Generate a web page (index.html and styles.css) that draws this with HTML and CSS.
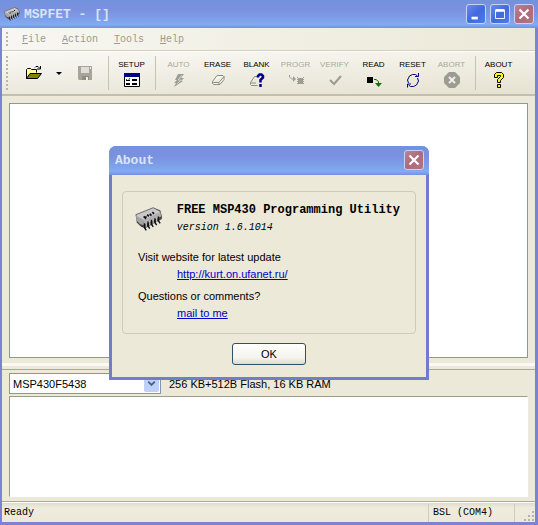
FILE: index.html
```
<!DOCTYPE html>
<html lang="en">
<head>
  <meta charset="utf-8">
  <title>MSPFET - []</title>
  <link rel="stylesheet" href="styles.css">
</head>
<body>

  <svg class="defs" aria-hidden="true">
    <!-- chip, shared by the title bar and the about box -->
    <symbol id="chip" viewBox="0 0 32 28">
      <path d="M1 9 21 1l8 3 2 7v3L12 25l-5-2-5-5z" fill="#444"/>
      <path d="M1 9 21 1l8 4 1 5-19 8-9-5z" fill="#c9c9c9" stroke="#666"/>
      <path d="M1 10l9 5v6l-4-1-4-4z" fill="#a4a4a4"/>
      <path d="M10 15 29 6l1 5-20 10z" fill="#b0b0b0"/>
      <path d="M11 19v5l2 3M15 17v5l2 3M19 15v5l2 3M23 13v5l2 3M27 11v5l2 3" fill="none" stroke="#111" stroke-width="1.6"/>
      <path d="M13 19v4l2 2M17 17v4l2 2M21 15v4l2 2M25 13v4l2 2" fill="none" stroke="#e4e4e4"/>
      <path d="m10 11 2 2 1-2M14 9l2 2M17 8l2 2M20 6l2 2" fill="none" stroke="#111" stroke-width="2"/>
    </symbol>
    <symbol id="cross" viewBox="0 0 20 20">
      <path d="m5 5 10 10M15 5 5 15" fill="none" stroke="#fff" stroke-width="2.4"/>
    </symbol>
  </svg>

  <div class="window">
    <!-- Title bar -->
    <header class="titlebar">
      <svg class="title-icon" aria-hidden="true"><use href="#chip"/></svg>
      <h1 class="title">MSPFET - []</h1>
      <button class="win-btn" aria-label="Minimize"><svg viewBox="0 0 20 20"><path d="M5 13h7v3H5z" fill="#fff"/></svg></button>
      <button class="win-btn" aria-label="Maximize"><svg viewBox="0 0 20 20"><path d="M5 6h10v9H5z" fill="none" stroke="#fff"/><path d="M5 6h10" stroke="#fff" stroke-width="3"/></svg></button>
      <button class="win-btn close" aria-label="Close"><svg viewBox="0 0 20 20"><use href="#cross"/></svg></button>
    </header>

    <!-- Menu -->
    <nav class="menubar">
      <span class="grip"></span>
      <button class="menu"><u>F</u>ile</button>
      <button class="menu"><u>A</u>ction</button>
      <button class="menu"><u>T</u>ools</button>
      <button class="menu"><u>H</u>elp</button>
    </nav>

    <!-- Toolbar -->
    <div class="toolbar">
      <span class="grip"></span>
      <button class="tool small open" aria-label="Open">
        <svg viewBox="0 0 16 16"><path d="M.5 13.500V4.500l1-1h3l1 1h5v3" fill="#ffff9c" stroke="#000"/><path d="M.5 13.500 4 8.500h11.500l-4 5z" fill="#848400" stroke="#000"/><path d="M9 2.500l1-1h2l2 2M14.500 1v3H11" fill="none" stroke="#000"/></svg>
      </button>
      <button class="tool arrow" aria-label="Recent files"><svg viewBox="0 0 16 16"><path d="M5 7h6l-3 3z"/></svg></button>
      <button class="tool small" aria-label="Save" disabled>
        <svg viewBox="0 0 16 16"><path d="M1 1h14v14H2l-1-1z" fill="#a5a59c"/><path d="M4 2h8v6H4z" fill="#dfddd4"/><path d="M5 11h7v4H5z" fill="#8e8e86"/><path d="M9 12h2v3H9z" fill="#efede4"/><path d="M13 2h1v2h-1z" fill="#efede4"/></svg>
      </button>
      <span class="sep"></span>
      <button class="tool">SETUP
        <svg viewBox="0 0 16 16"><path d="M.5 1.500h15v13H.5z" fill="#fff" stroke="#000"/><path d="M0 1h16v4H0z" fill="#000084"/><path d="m2 7 2 2 2-3" fill="none" stroke="#087808"/><path d="M2 11h4v2H2zM8 7h5v2H8zM8 11h5v2H8zM2 8h4v1H2z"/></svg>
      </button>
      <span class="sep"></span>
      <button class="tool" disabled>AUTO
        <svg viewBox="0 0 16 16"><path d="M7 2h6l-3 4h3l-3 3h2l-9 6 2-4H3l3-3H4z" fill="#9c9c94"/><path d="m11 3-4 5h3l-4 4" fill="none" stroke="#d4d2c8"/></svg>
      </button>
      <button class="tool">ERASE
        <svg viewBox="0 0 16 16"><path d="M2.500 9.500 7 3.500h6l1 1v3l-4 5H4l-1.500-1zM2.500 9.500l1 1H9l5-6M9 10.500v2" fill="#f7f6ee" stroke="#8c8c84"/></svg>
      </button>
      <button class="tool">BLANK
        <svg viewBox="0 0 16 16"><path d="M1.500 10.500l4-6h3M1.500 10.500v2l1 1h6M2 11h5" fill="none" stroke="#8c8c84"/><path d="M9 5.500V4l1.500-1.500h2L14 4v1.500L11.500 8v2.500M11.500 12v3" fill="none" stroke="#000084" stroke-width="2.500"/></svg>
      </button>
      <button class="tool" disabled>PROGR
        <svg viewBox="0 0 16 16"><path d="M1.500 3v2l2 2H6" fill="none" stroke="#9c9c94"/><path d="m5 4 3 3-3 3z" fill="#9c9c94"/><path d="M10 6h5v6h-5z" fill="#9c9c94"/><path d="M9.500 5v8M15.500 5v8" stroke="#9c9c94" stroke-dasharray="1 1"/></svg>
      </button>
      <button class="tool" disabled>VERIFY
        <svg viewBox="0 0 16 16"><path d="m3 8 4 4 7-8" fill="none" stroke="#9c9c94" stroke-width="2"/></svg>
      </button>
      <button class="tool">READ
        <svg viewBox="0 0 16 16"><path d="M1 5h6v6H1z"/><path d="M8 7.500h2l2.500 2V12" fill="none" stroke="#087808"/><path d="M9 11h7l-3.500 4z" fill="#087808"/></svg>
      </button>
      <button class="tool">RESET
        <svg viewBox="0 0 16 16"><path d="M3.500 11 2.500 8l2-4 3-1.500h3l2 1.500M13.500 1v3.500H10M12.500 6l1 3-2 4-3 1.500h-3L3.500 13M2.500 15.500v-3.500H6" fill="none" stroke="#000084"/></svg>
      </button>
      <button class="tool" disabled>ABORT
        <svg viewBox="0 0 16 16"><path d="M5 0h6l5 5v6l-5 5H5l-5-5V5z" fill="#9c9c94"/><path d="m5 5 6 6M11 5l-6 6" stroke="#f2f0e6" stroke-width="2"/></svg>
      </button>
      <span class="sep"></span>
      <button class="tool">ABOUT
        <svg viewBox="0 0 16 16"><path d="M3.500 5.500v-3l2-2h5l2 2v3l-3 3v2h-3v-3l3-3v-1h-3v2zM6.500 12.500h3v3h-3z" fill="#ff0" stroke="#000"/></svg>
      </button>
    </div>

    <!-- Work area -->
    <main class="work">
      <textarea class="pane memory" aria-label="Memory"></textarea>
      <div class="splitter"></div>
      <div class="device">
        <div class="combo">
          <select id="device" aria-label="Device">
            <option>MSP430F5438</option>
          </select>
          <svg class="combo-arrow" viewBox="0 0 15 18" aria-hidden="true"><path d="m4 7 3.500 3.500L11 7" fill="none" stroke="#4d6185" stroke-width="2"/></svg>
        </div>
        <label for="device">256 KB+512B Flash, 16 KB RAM</label>
      </div>
      <textarea class="pane log" aria-label="Log"></textarea>
    </main>

    <!-- Status bar -->
    <footer class="status">
      <span class="status-text">Ready</span>
      <span class="status-port">BSL (COM4)</span>
      <svg class="resize" viewBox="0 0 12 12" aria-hidden="true"><path d="M9 1h2v2H9zM5 5h2v2H5zM9 5h2v2H9zM1 9h2v2H1zM5 9h2v2H5zM9 9h2v2H9z" fill="#b8b4a2"/></svg>
    </footer>
  </div>

  <!-- About box -->
  <div class="overlay">
    <section class="dialog" role="dialog" aria-labelledby="about-title">
      <header class="titlebar dialog-title">
        <h2 class="title" id="about-title">About</h2>
        <button class="win-btn close" aria-label="Close"><svg viewBox="0 0 20 20"><use href="#cross"/></svg></button>
      </header>
      <div class="dialog-body">
        <div class="group">
          <div class="product">
            <svg class="product-icon" aria-hidden="true"><use href="#chip"/></svg>
            <div>
              <div class="name">FREE MSP430 Programming Utility</div>
              <div class="version">version 1.6.1014</div>
            </div>
          </div>
          <p>Visit website for latest update</p>
          <a href="http://kurt.on.ufanet.ru/">http://kurt.on.ufanet.ru/</a>
          <p>Questions or comments?</p>
          <a href="#mail">mail to me</a>
        </div>
        <button class="ok">OK</button>
      </div>
    </section>
  </div>

</body>
</html>
```
FILE: styles.css
```
* {
  box-sizing: border-box;
}
body {
  margin: 0;
  background: #ece9d8;
  color: #000;
  font: 11px "Liberation Sans", Arial, sans-serif;
}
button {
  padding: 0;
  border: none;
  background: none;
  color: inherit;
  font: inherit;
}
svg {
  display: block;
}
.defs {
  position: absolute;
  width: 0;
  height: 0;
}

/* main window */
.window {
  display: flex;
  flex-direction: column;
  height: 100vh;
  border: solid #7b83d3;
  border-width: 0 3px 3px 2px;
}
.titlebar {
  display: flex;
  align-items: center;
  gap: 4px;
  height: 28px;
  margin: 0 -3px 0 -2px;
  padding: 0 4px;
  background: linear-gradient(#7392dd, #7b91de 35%, #7d9ee9 65%, #83abf0 88%, #788ddc);
}
.title {
  flex: 1;
  margin: 0;
  color: #d8e4f8;
  font: bold 13px "Liberation Mono", "Courier New", monospace;
}
.title-icon {
  width: 16px;
  height: 16px;
}
.win-btn {
  width: 20px;
  height: 20px;
  border: 1px solid #c6d3f5;
  border-radius: 3px;
  background: linear-gradient(135deg, #6b8bea, #4269de 50%, #4a7af0);
}
.win-btn svg {
  width: 18px;
  height: 18px;
}
.win-btn.close {
  background: linear-gradient(135deg, #bf8194, #ae6a7c 50%, #b4757e);
}

/* menu and toolbar */
.menubar, .toolbar {
  display: flex;
  padding-left: 4px;
  background: linear-gradient(90deg, #f7f6f2, #efeddf 70%, #ebe8d8);
}
.menubar {
  align-items: center;
  gap: 16px;
  height: 23px;
  border-bottom: 1px solid #d2cfbd;
  color: #9c9a8c;
  font: 10px "Liberation Mono", "Courier New", monospace;
}
.grip {
  align-self: stretch;
  width: 2px;
  margin: 4px 0;
  background: repeating-linear-gradient(#b9b6a5 0 2px, transparent 2px 4px);
}
.menubar .grip {
  margin-right: -2px;
}
.toolbar {
  height: 45px;
  border-top: 1px solid #fff;
  border-bottom: 2px solid #c2bfae;
  background: linear-gradient(rgba(255, 255, 255, 0.4), rgba(220, 216, 196, 0.4)), linear-gradient(90deg, #f5f4ee, #ece9d9);
}
.tool {
  display: flex;
  flex-direction: column;
  align-items: center;
  gap: 3px;
  width: 39px;
  padding-top: 8px;
  font-size: 8px;
  line-height: 9px;
}
.tool:disabled {
  color: #aaa89c;
}
.tool svg {
  width: 16px;
  height: 16px;
}
.tool.small, .tool.arrow {
  justify-content: center;
  padding: 0;
}
.tool.open {
  width: 36px;
  margin-left: 8px;
}
.tool.arrow {
  width: 13px;
}
.sep {
  width: 8px;
  margin: 4px 0;
  background: linear-gradient(#c5c2b2, #c5c2b2) center / 1px 100% no-repeat;
}

/* work area */
.work {
  display: flex;
  flex: 1;
  flex-direction: column;
  min-height: 0;
  padding: 7px 7px 4px;
  border-bottom: 1px solid #aca899;
}
.pane {
  min-height: 0;
  margin: 0;
  border: 1px solid #8996a8;
  background: #fff;
  resize: none;
}
.memory {
  flex: 21;
}
.splitter {
  height: 7px;
  margin: 5px -7px 3px;
  border-top: 3px solid #faf9f4;
  border-bottom: 1px solid #aca899;
}
.device {
  display: flex;
  align-items: center;
  gap: 8px;
  margin-bottom: 2px;
}
.combo {
  display: flex;
  width: 152px;
  height: 21px;
  padding: 1px;
  border: 1px solid #8196b0;
  background: #fff;
}
.combo select {
  flex: 1;
  padding: 0 2px;
  border: none;
  background: none;
  color: inherit;
  font: inherit;
  appearance: none;
}
.combo-arrow {
  width: 15px;
  border-radius: 2px;
  background: #bfd1f8;
}
.log {
  flex: 8;
  border-color: #9d9a8c #fff #fff #9d9a8c;
}

/* status bar */
.status {
  display: flex;
  align-items: center;
  height: 20px;
  padding-left: 2px;
  border-top: 1px solid #fff;
  background: linear-gradient(#dedbca, #efecdf 25%, #ece9d8);
  font: 10px "Liberation Mono", "Courier New", monospace;
}
.status-text {
  flex: 1;
}
.status-port {
  width: 87px;
  padding-left: 4px;
  border: solid #d0cdbb;
  border-width: 0 1px;
  line-height: 18px;
}
.resize {
  align-self: flex-end;
  width: 12px;
  height: 12px;
  margin-left: 8px;
}

/* about box */
.overlay {
  position: fixed;
  inset: 0;
  display: flex;
  align-items: center;
  justify-content: center;
}
.dialog {
  width: 320px;
  border: solid #747bcb;
  border-width: 0 3px 3px;
  border-radius: 7px 7px 0 0;
  background: #ece9d8;
}
.dialog-title {
  height: 29px;
  margin: 0 -3px;
  padding: 0 5px 0 6px;
  border-radius: 7px 7px 0 0;
}
.dialog-body {
  padding: 16px 10px 12px;
}
.group {
  padding: 10px 15px 11px;
  border: 1px solid #cdcbba;
  border-radius: 4px;
  line-height: 17px;
}
.product {
  display: flex;
  align-items: center;
  gap: 14px;
  padding-bottom: 13px;
  margin-left: -3px;
  font-family: "Liberation Mono", "Courier New", monospace;
}
.product-icon {
  width: 32px;
  height: 28px;
}
.name {
  font-size: 12px;
  font-weight: bold;
  white-space: nowrap;
}
.version {
  font-size: 10px;
  font-style: italic;
}
.group p {
  margin: 0;
}
.group a {
  display: block;
  width: max-content;
  margin: 0 0 5px 39px;
  color: #0000c8;
}
.group a:last-child {
  margin-bottom: 0;
}
.ok {
  display: block;
  width: 74px;
  height: 22px;
  margin: 9px auto 0;
  border: 1px solid #29526b;
  border-radius: 3px;
  background: linear-gradient(#fff, #f4f3ec 70%, #dedacb);
}
```
